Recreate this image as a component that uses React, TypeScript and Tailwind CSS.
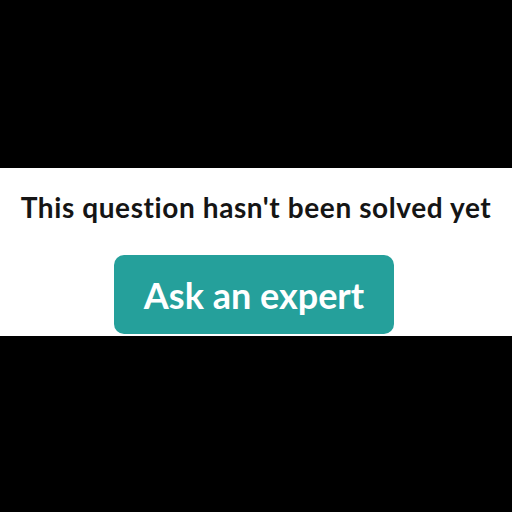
export default function App() {
  return (
    <div className="flex h-[512px] w-[512px] flex-col bg-black pt-[168px]">
      <div className="flex h-[168px] flex-col items-center bg-white pt-[19px] font-['Lato','Open_Sans',sans-serif]">
        <p className="text-[28px] font-bold leading-[40px] tracking-[0.6px] text-[#151515]">
          This question hasn't been solved yet
        </p>
        <div className="mr-[4px] mt-[28px] flex h-[79px] w-[280px] items-center justify-center rounded-[10px] bg-[#25a09b]">
          <span className="text-[36px] font-bold text-white">Ask an expert</span>
        </div>
      </div>
    </div>
  )
}
